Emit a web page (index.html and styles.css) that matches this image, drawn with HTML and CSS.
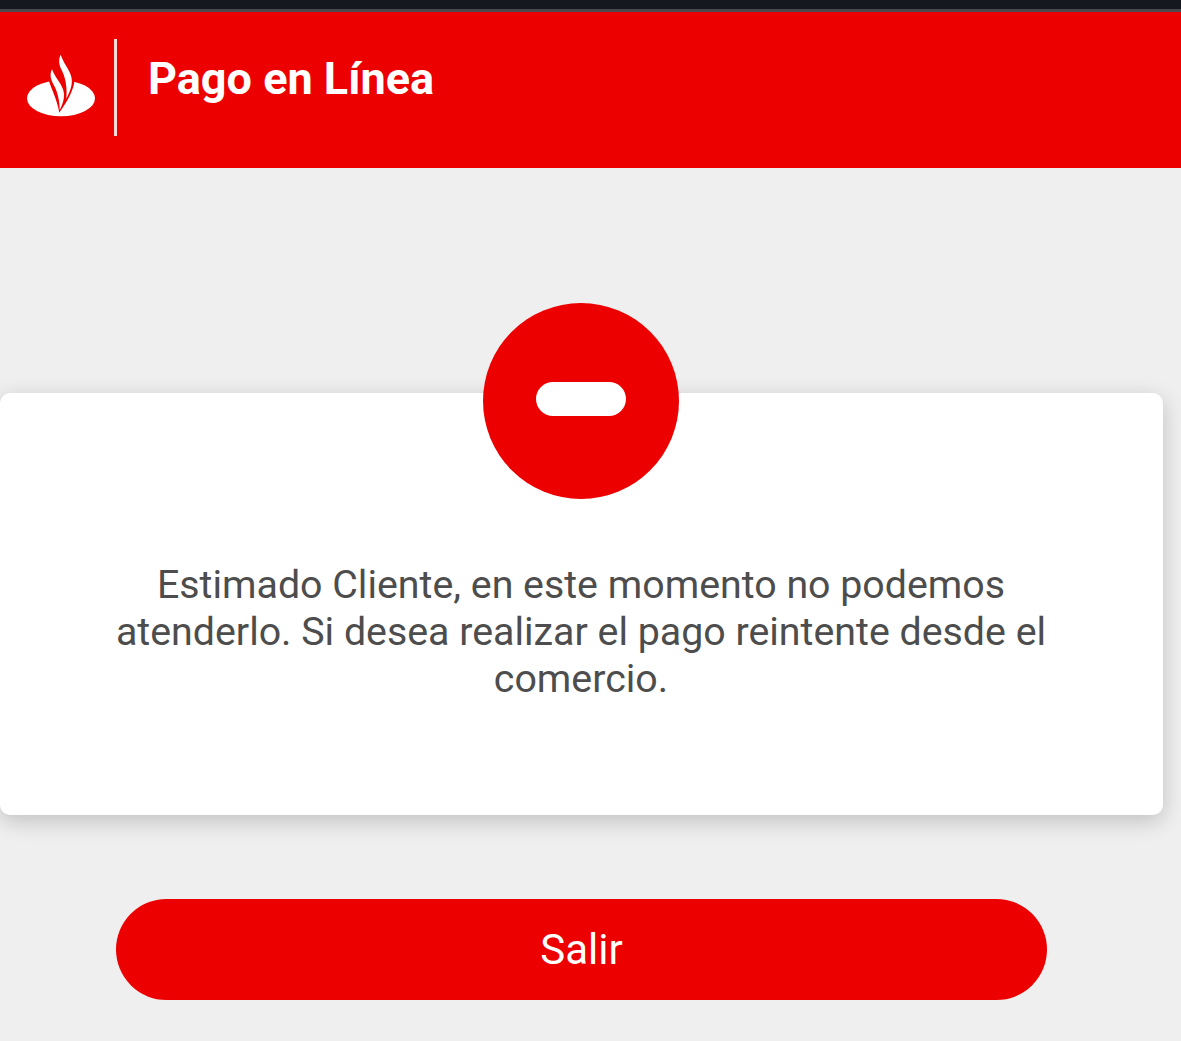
FILE: index.html
```html
<!DOCTYPE html>
<html lang="es">
<head>
<meta charset="utf-8">
<title>Pago en Línea</title>
<link rel="stylesheet" href="styles.css">
</head>
<body>
<div class="status"></div>
<header class="header">
  <svg class="logo" viewBox="0 0 270 255" width="90" height="85" aria-hidden="true">
    <ellipse class="logo-white" cx="135" cy="175" rx="102" ry="54"/>
    <path class="logo-red" d="M98 118 C102 140 122 172 130 218 C142 200 178 152 176 110 Z"/>
    <path class="logo-white" d="M108 88 C99 106 106 122 113 134 C124 154 131 180 131 210 C142 190 148 168 141 148 C133 126 118 114 108 88 Z"/>
    <path class="logo-white" d="M134 44 C125 62 131 78 138 92 C148 112 154 140 151 176 C164 150 173 128 164 104 C157 84 143 70 134 44 Z"/>
  </svg>
  <span class="divider"></span>
  <h1 class="title">Pago en Línea</h1>
</header>
<main class="main">
  <section class="card">
    <div class="badge"><span class="badge-bar"></span></div>
    <p class="message">Estimado Cliente, en este momento no podemos atenderlo. Si desea realizar el pago reintente desde el comercio.</p>
  </section>
  <button class="exit" type="button">Salir</button>
</main>
</body>
</html>
```
FILE: styles.css
```css
* { box-sizing: border-box; }
html, body { margin: 0; height: 100%; }
body {
  width: 1181px;
  height: 1041px;
  overflow: hidden;
  background: #efefef;
  font-family: Roboto, "Liberation Sans", sans-serif;
}
.status {
  height: 12px;
  background: #15181f;
  border-bottom: 3px solid #4a4a4c;
}
.header {
  height: 156px;
  background: #ec0000;
  display: flex;
  align-items: flex-start;
  padding: 27px 0 0 16px;
}
.logo { flex: none; margin-top: 1px; filter: blur(0.6px); }
.logo-white { fill: #fff; }
.logo-red { fill: #ec0000; }
.divider {
  width: 3px;
  height: 97px;
  margin-left: 8px;
  background: #fbd9d9;
}
.title {
  margin: 14px 0 0 31px;
  color: #fff;
  font-size: 45px;
  font-weight: 700;
  line-height: 52px;
}
.main {
  display: flex;
  flex-direction: column;
  align-items: center;
  padding-top: 225px;
  padding-right: 18px;
}
.card {
  position: relative;
  width: 100%;
  height: 422px;
  background: #fff;
  border-radius: 10px;
  box-shadow: 0 6px 22px rgba(0, 0, 0, 0.2);
  padding: 169px 101px 0 100px;
}
.badge {
  position: absolute;
  left: 483px;
  top: -90px;
  width: 196px;
  height: 196px;
  border-radius: 50%;
  background: #ec0000;
  display: flex;
  align-items: center;
  justify-content: center;
  padding-bottom: 4px;
}
.badge-bar {
  width: 90px;
  height: 34px;
  border-radius: 17px;
  background: #fff;
}
.message {
  margin: 0;
  color: #4d4d4d;
  font-size: 39.35px;
  line-height: 47px;
  text-align: center;
}
.exit {
  width: 931px;
  height: 101px;
  margin-top: 84px;
  border: 0;
  border-radius: 51px;
  background: #ec0000;
  color: #fff;
  font-family: inherit;
  font-size: 42px;
}
```
